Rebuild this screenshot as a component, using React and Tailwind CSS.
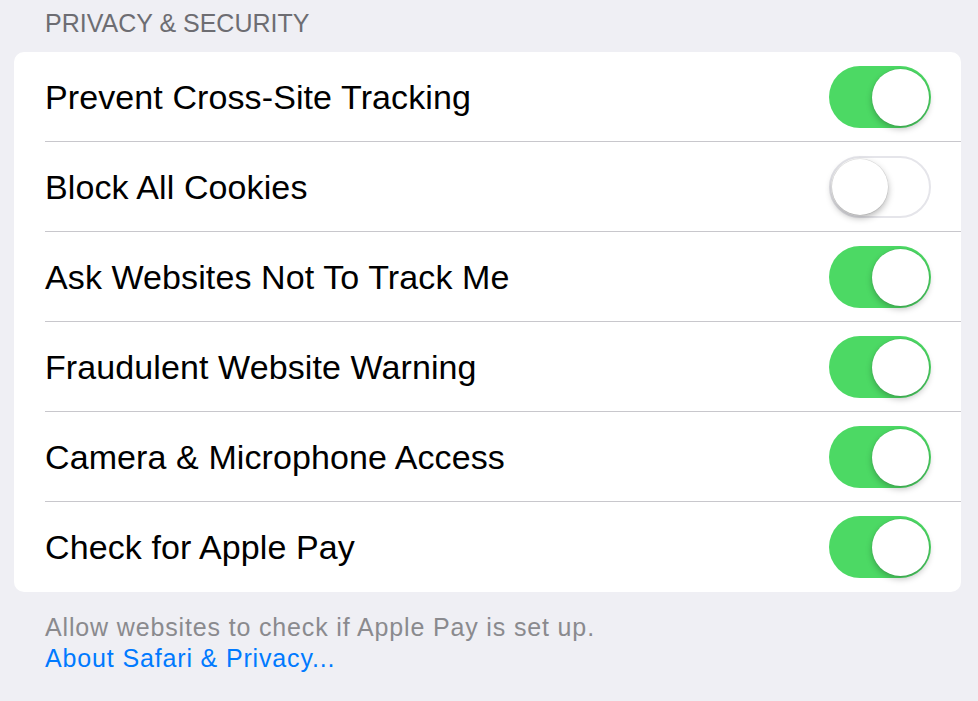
import React from "react";

const rows = [
  { label: "Prevent Cross-Site Tracking", on: true },
  { label: "Block All Cookies", on: false },
  { label: "Ask Websites Not To Track Me", on: true },
  { label: "Fraudulent Website Warning", on: true },
  { label: "Camera & Microphone Access", on: true },
  { label: "Check for Apple Pay", on: true },
];

function Toggle({ on }) {
  if (on) {
    return (
      <div className="relative w-[102px] h-[62px] rounded-full bg-[#4cd964] shrink-0">
        <div className="absolute right-[2px] top-[3px] w-[57px] h-[57px] rounded-full bg-white shadow-[0_3px_6px_rgba(0,0,0,0.25),0_0_0_0.5px_rgba(0,0,0,0.08)]" />
      </div>
    );
  }
  return (
    <div className="relative w-[102px] h-[62px] rounded-full bg-white border-2 border-[#e5e5ea] shrink-0">
      <div className="absolute left-[1px] top-[1px] w-[56px] h-[56px] rounded-full bg-white shadow-[0_3px_7px_rgba(0,0,0,0.3),0_0_0_0.5px_rgba(0,0,0,0.1)]" />
    </div>
  );
}

export default function App() {
  return (
    <div
      className="w-[978px] h-[701px] bg-[#efeff4] overflow-hidden"
      style={{ fontFamily: '"Liberation Sans", Arial, sans-serif' }}
    >
      <div className="h-[52px] pl-[45px] pt-[8px] text-[25px] leading-[30px] text-[#6d6d72]">
        PRIVACY &amp; SECURITY
      </div>
      <div className="ml-[14px] w-[947px] bg-white rounded-[10px] overflow-hidden">
        {rows.map((r, i) => (
          <div key={r.label} className="pl-[31px] h-[90px]">
            <div
              className={
                "h-full flex items-center justify-between pr-[30px] " +
                (i < rows.length - 1 ? "border-b border-[#c8c7cc]" : "")
              }
            >
              <span className="text-[34px] leading-none text-black tracking-[0.1px]">{r.label}</span>
              <Toggle on={r.on} />
            </div>
          </div>
        ))}
      </div>
      <div className="pl-[45px] pt-[20px] text-[25px] leading-[31px] tracking-[0.85px]">
        <div className="text-[#8a8a8e]">Allow websites to check if Apple Pay is set up.</div>
        <div className="text-[#007aff]">About Safari &amp; Privacy...</div>
      </div>
    </div>
  );
}
